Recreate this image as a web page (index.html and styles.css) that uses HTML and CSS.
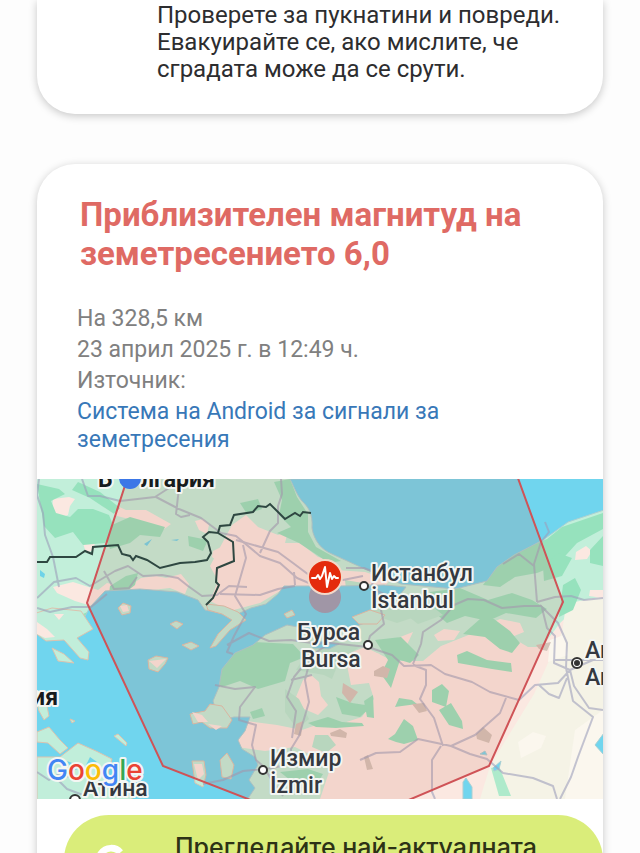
FILE: index.html
```html
<!DOCTYPE html>
<html lang="bg">
<head>
<meta charset="utf-8">
<meta name="viewport" content="width=device-width, initial-scale=1">
<title>Сигнал за земетресение</title>
<link rel="stylesheet" href="styles.css">
</head>
<body>
<main class="feed">
  <section class="card card-tips">
    <p class="tip">Проверете за пукнатини и повреди. Евакуирайте се, ако мислите, че сградата може да се срути.</p>
  </section>

  <section class="card card-quake">
    <h1 class="title">Приблизителен магнитуд на земетресението 6,0</h1>
    <div class="details">
      <p>На 328,5 км</p>
      <p>23 април 2025 г. в 12:49 ч.</p>
      <p>Източник:</p>
      <a class="source" href="#source">Система на Android за сигнали за земетресения</a>
    </div>
    <svg class="map" viewBox="37 479 566 320" preserveAspectRatio="xMidYMid slice" role="img" aria-label="Карта">
      <rect x="37" y="479" width="566" height="320" fill="#c2efda"/>
      <!-- dry land -->
      <g fill="#fbe8e1">
        <path d="M232 525l14-10 12 12 20 8 10-4-3 12 15 0 18 14 14 4 3 9 30 2 25 8-8 10-72-3-30 4-20 12-30 8-20-10 8-20-8-15z"/>
        <path d="M92 496l12 4 22 10 20 0 25 14-8 6-22-8-24-6-12-8zM53 499l16-2 6 2-5 7-2 9-10 4-6-7zM83 543l8-6 4 3-1 10-8 3zM195 521l8-2 6 6-2 9-8-4zM213 551l8-4 7 6-2 11-9-3-5-4zM53 587l20-5 25 8 9-7 9 2-5 13-16 9-20-6-18-8zM127 588l14-10 15-2 10 2 15-4 8 10-4 10-15-6-18 2-18 8-8-3z"/>
        <path d="M345 655l20-8 28 14 30 0 18-15 30-12 40 3 17 10 14 0 18-24 20-18 23 0v194H320l10-30-15-12-20-10-30 4-28-4-10-16 20-10 30 4 25 5 20-7 15 2 25-8 12-18-5-16-18 2z"/>
        <path d="M303 680l8-5 8 7 2 14 7 9-10 10-14-6-8-12zM395 639l18-7-8 17-11-3zM480 628l20-9 20 4 4 9-20 8-18-3z"/>
      </g>
      <path fill="#f5f3e6" d="M603 596l-28 6-10 10-3 20-28 62-44 72-10 33h123z"/>
      <path fill="#fbf7ee" d="M518 742l15-10 13 4-5 12-20 10zM575 730l28-20v89h-38zM550 640l14-5 4 20-20 7z"/>
      <path fill="#aeeacb" d="M491 768l8-2 12 30-12 0z"/>
      <!-- patches of dry ground inside the green belt -->
      <g fill="#fbe8e1">
        <path d="M576 552l10-6 6 5-5 8-12 1zM510 602l12-3-2 8-8 0zM434 635l10-6 16 2-6 9-16 1zM590 590l13 0v8l-14-2zM372 652l8 2-6 8-8-2z"/>
      </g>
      <!-- woodland -->
      <g fill="#96e2bd">
        <path d="M37 484l22 5 6 5-14 7 5 12 14 4 8-8 15 0 16 6 4 10-8 18-22 2-10-13-18 6-11-12z"/>
        <path d="M78 482l22 10 20 16-6 6-24-16-18-8z"/>
        <path d="M112 525l18-8 35 10-5 10-20-2-10 8-20 6-4-10zM188 536l20 4-5 11-14-5zM110 586l16-10 12-3-3 12-14 11-12-2z"/>
        <path d="M274 482l16-3 7 18 11 17 0 18 8 15 25 14-12 2-30-20-22-10 14-6-12-12 3-15z"/>
        <path d="M240 503l18-4 4 10-15 5zM233 650l20-8 40 2 12 13-15 6-5 18-27 8-18-8-18 6-14-8z"/>
        <path d="M497 566l20-14 30-13 15-12 41-14v16l-26 14-20 22-20 8-22 4-15 10-17-2z"/>
        <path d="M543 567l15-14 14 5-10 18-18 5zM563 585l12-7 6 12-8 20-14 7zM590 550l13-14v30l-13-3zM430 592l30-4 28 12 24-7 20 7 15 9-11 9-30-5-18 8-23-5-18 7-12-10z"/>
        <path d="M375 640l26-3 18 18-9 8-10-3-9 28-10-14 7-14zM336 697l16 6 20 3-12 11-18-3zM364 701l9-6 1 23-7-1zM395 707l4-9 13 2 5 4-15 2zM388 739l7-5 9-15 9 7 5 14-14 4-8-2zM308 723l20-6 14 5 20 1 2 3-28 2-20-1zM457 655l10-4 20 9 24 3 1 9-20-3-34-6zM432 690l10-6 7 7-3 16-14-5zM439 710l12-7 11 18 1 8-14-4zM480 619l14 0 16 12 10 12-8 10-12-4-15-12-22-3z"/>
        <path d="M58 630l20-14 24-10 4 14-22 9-8 9zM250 712l12-4 3 8-12 3zM280 772l28-3 15 5-5 8-28-2z"/>
      </g>
      <g fill="#b6e9d0">
        <path d="M345 580l30 5 30 10 30 0-8 18-30 10-30-10-20-15z"/><path d="M400 610l28-7 15 12-25 9zM315 735l13 0 8 10-10 8-14-6zM296 670l14-22 20-8 30 7-20 12-8 20-8-4zM285 689l14 10 10 20-12 10-12-17z"/>
      </g>
      <g fill="#d3c4b9">
        <path d="M374 671l9-5 7 3-3 9-13-2zM343 683l15 9-8 11-8-10zM330 733l10-4 7 4-1 5-15-2zM412 704l12-1 3 8-8 2zM476 734l7-7 9 8-3 8-12-4zM536 645l15-3-4 9-8-2zM364 757l4-2 5 14-6 1zM296 724l7-3-2 15-7-2z"/>
      </g>
      <!-- water -->
      <g fill="#70d5ee" stroke="#a9cfd3" stroke-width="1">
        <path d="M290 479c5 10 7 16 12 22 6 6 11 12 10 27 2 13 10 22 20 26l35 16 34 14 54 5 32-8 10-14 17-12 29-15 25-18 39-13v-33z"/>
        <path d="M28 610l18 8 12 14 23-8 9-17 15-16 35-2 37 3 21 8 7 10 28 6 18-8 15-4 12-10 6-8 38 0 18 0 44-1 22 2-7 9-17 1-14 15 12 3-15 8-20 7-36-1-22-4-22 10-12 10-18 8-13 16-3 18-6 14 6 20 15-4 16 0-5 14-7 9 4 9 13 8 3 8-9 15 6 8-8 12 4 14 6 8-17 3-5 24H28z"/>
        <path d="M310 645l12-4 17 3-10 5-16-1zM595 745l9-12v22zM463 782l3-4 6 9 0 12-9 0zM480 754l5-3 2 4zM493 768l8-7-2 8-5 2z"/>
      </g>
      <g fill="#c1eeda" stroke="#dcc2ae" stroke-width="1">
        <path d="M206 604l18 2 14 6 8 8-16 10-14 16-6 2 8-14 14-14-10-6-14-4z"/>
        <path d="M30 615l22-7 29 3 12 18-16 9 12 14-1 8-8-2-16-18-18 1-16-12z"/>
        <path d="M52 648l12 6 10 9-16-2zM148 660l8-4 12 2-3 6-7 8-9-3zM182 645l9-3 8 4-8 4zM190 714l15-3 5-7 12 2 10 14-5 8-17 0-8-6-9 2zM192 761l12 0 2 14-3 12-8-4zM220 760l7-7 7 12-3 14-9-2zM37 732l12-5 11 13 8 8-8 6-12-11-11-1zM37 757l23 0 18-14 18 8 16 8-5 18 28 24-20 0H37zM114 736l4-2 9 9-1 3zM118 608l5-5 8 3-1 7-8 2zM170 624l6-3 7 3-6 5zM284 614l8-4 3 5-8 3zM352 617l18-7 15 5-8 9-18 0z"/>
        <path d="M37 704l10 2 2 10-5 4-5-9zM70 719l5 2-3 2z"/>
      </g>
      <g fill="#fbe8e1"><path d="M37 622l10 7 8 8-10 1-8-4zM149 661l17-2-9 9zM192 712l10 3 6 7-10 0zM120 606l7-1 2 6-6 1zM54 614l10 0-5 6zM194 764l8 0 2 10-6 6zM208 724l14 2-6 4z"/></g>
      <g fill="#6ed3e8"><path d="M40 570l5 4-1 4-4-2zM144 544l8-5-5 7zM171 540l8-1-2 2zM67 761l15 6-9 4zM90 757l7 5-11 3z"/></g>
      <!-- roads -->
      <g class="roads">
        <path d="M39 479l-2 16 6 18 2 22 8 22 6 30M37 598l17-16 22-4 14 8 25-15 13-5 15 10 19-1 16 3 10 8 14 10 15-1 12-9 18 1M37 608l13 4 22-5 19 0 16-13M82 479l6 17 12 0 20 5 35-4 14-9M156 497l23 12 22 9 20 15 15 3 24 20 20 7 17 15 19 8M180 479l-4 35 5 3 9-2M104 571l10 18 15-1 8-11"/>
        <path d="M281 479l1 15-4 12 0 17-8 8-10 22M236 540l42 12 15 11 20 15 30 2 20-4M243 545l3 13-11 38 11 18-12 22-7 16 6 2M220 594l40 1 18-6 17-3M294 572l1 13M346 568h18l10 4-2 15M364 585l22 10-5 15 3 14-14 12-3 10M227 645l22-12 20 8 22-1 28 4 36-9M368 647l24 8 12 11 27-1 14 9 27 8 18 10 29 8 16-15 23-2 12-13 23-10M368 647l-38-4-18 12-18 22-7 20 9 14-4 27M310 660l-5 20 4 22-10 34-8 13v9M312 675l-21 5M360 760l16-7 24-1 18-13 33 7 24-11 25-22 6-15M443 746l-9-28-14-19 6-14 0-15-13-5M451 746l19 8 17 5 16 14 30 5 20 8 4 13M441 746l-9 14 0 32 3 7M413 664l8-20 2-12 18-12 13-15 14-6 16 1 18 8 22-2 18 0M537 602l-3-38 7-22 8-10-4-10M534 566l-15-12-16 10M537 602l18-5 16-1 13 4 19-2M542 608l5 20 8 8-1 27 16 7 4 16 15 22 14 2M554 660h49M540 605l18 18 9 20-1 25 7 33 20 16-15 40-7 20-11 22M539 685l10 9 10 4 8-20M215 685l20 4 20-2-15 20-1 13 17 5-4 20 4 15 7 6 10 16 10 14M203 784l20-4 20-9 30-3 27-7M37 772l12 8 8-5 22 3M55 777l12 12 16 6M92 776l12 10 18-5"/>
      </g>
      <!-- quake area -->
      <path class="area" d="M130 470l-43 133 76 163 170 66 156-66 74-164-48-132z"/>
      <path class="border" d="M37 562H47L50 557 76 557 85 551 92 554 93 547 118 545 122 554 130 556 133 560 136 556 147 560 160 568 180 563 195 562 207 560 211 553 208 542 203 537 209 532 218 533 220 526 230 525 234 515 253 512 258 506 266 507 270 504 285 519 295 513 300 516 303 512 311 513M218 533L233 542 234 561 217 568 216 582 219 585 213 598 206 605"/>
      <circle cx="325" cy="597" r="16" fill="#a096a6"/>
      <g>
        <circle cx="325" cy="577" r="17" fill="#e42b0c" stroke="#f3d8c8" stroke-width="2"/>
        <path d="M312 578h4l2-3 2 4 2-3 3-9 2 20 3-14 2 6 2-3 2 2h2" fill="none" stroke="#fff" stroke-width="2" stroke-linejoin="round" stroke-linecap="round"/>
      </g>
      <g class="dots">
        <circle cx="364" cy="586" r="4"/><circle cx="368" cy="645" r="4"/><circle cx="263" cy="770" r="4"/><circle cx="75" cy="800" r="5"/>
        <circle cx="577" cy="663" r="5"/><circle cx="577" cy="663" r="2" fill="#333"/>
      </g>
      <g class="city">
        <text x="371" y="581">Истанбул</text><text x="371" y="608">İstanbul</text>
        <text x="297" y="640">Бурса</text><text x="301" y="667">Bursa</text>
        <text x="270" y="766">Измир</text><text x="270" y="793">İzmir</text>
        <text x="585" y="658">Анкара</text><text x="585" y="685">Ankara</text>
        <text x="83" y="796">Атина</text>
      </g>
      <g class="country">
        <text x="98" y="487">Б</text><text x="141" y="487">лгария</text>
        <text x="58" y="705" text-anchor="end">Гърция</text>
      </g>
      <circle cx="130" cy="478" r="11" fill="#3b77e7"/>
      <text class="google" x="47" y="780"><tspan fill="#4285f4">G</tspan><tspan fill="#ea4335">o</tspan><tspan fill="#fbbc05">o</tspan><tspan fill="#4285f4">g</tspan><tspan fill="#34a853">l</tspan><tspan fill="#ea4335">e</tspan></text>
    </svg>
    <button class="cta" type="button">
      <svg class="cta-icon" viewBox="0 0 36 36" aria-hidden="true"><path d="M28 9A13 13 0 1 0 31 19H19" fill="none" stroke="#fff" stroke-width="7"/></svg>
      <span>Прегледайте най-актуалната</span>
    </button>
  </section>
</main>
</body>
</html>
```
FILE: styles.css
```css
* { box-sizing: border-box; }

body {
  margin: 0;
  background: #fdfdfd;
  font-family: Roboto, "Noto Sans", sans-serif;
  color: #2d2d2f;
}

p, h1 { margin: 0; }

.feed {
  display: flex;
  flex-direction: column;
  gap: 50px;
  height: 100vh;
  overflow: hidden;
  padding: 0 37px;
}

.card {
  flex: none;
  background: #fff;
  box-shadow: 0 2px 8px rgba(0, 0, 0, 0.22);
}

.card-tips {
  border-radius: 0 0 38px 38px;
  padding: 2px 40px 31px 120px;
}

.tip {
  font-size: 24px;
  line-height: 27px;
}

.card-quake {
  border-radius: 38px 38px 0 0;
  padding-top: 31px;
}

.title {
  padding: 0 43px;
  font-size: 33px;
  line-height: 39px;
  font-weight: 700;
  color: #df6a64;
}

.details {
  padding: 30px 40px 25px;
  font-size: 23px;
  line-height: 31px;
  color: #808080;
}

.source {
  display: block;
  max-width: 400px;
  padding-top: 2px;
  line-height: 28px;
  color: #3878b8;
  text-decoration: none;
}

.map {
  display: block;
  width: 100%;
}

.roads {
  fill: none;
  stroke: #9c9fba;
  stroke-width: 2;
  stroke-linejoin: round;
  opacity: 0.6;
}

.area {
  fill: rgba(203, 105, 89, 0.15);
  stroke: #cf5357;
  stroke-width: 2;
}

.border {
  fill: none;
  stroke: #2e4741;
  stroke-width: 2;
}

.dots {
  fill: #fff;
  stroke: #333;
  stroke-width: 2;
}

.city, .country, .google {
  paint-order: stroke;
  stroke: #f4f6f3;
  stroke-width: 4px;
  stroke-linejoin: round;
}

.city {
  font-size: 23px;
  font-weight: 500;
  fill: #343840;
}

.country {
  font-size: 23px;
  font-weight: 700;
  fill: #171b1d;
}

.google {
  font-family: Inter, sans-serif;
  font-size: 28px;
  font-weight: 500;
}

.cta {
  display: flex;
  align-items: center;
  gap: 47px;
  width: calc(100% - 27px);
  min-height: 90px;
  margin: 16px 0 0 27px;
  padding: 0 30px 28px;
  border: 0;
  border-radius: 45px;
  background: #daed7a;
  color: #2d3216;
  font-family: Inter, sans-serif;
  font-size: 25px;
  font-weight: 500;
  white-space: nowrap;
}

.cta-icon {
  flex: none;
  width: 34px;
  height: 34px;
  align-self: flex-start;
  margin-top: 29px;
}
```
